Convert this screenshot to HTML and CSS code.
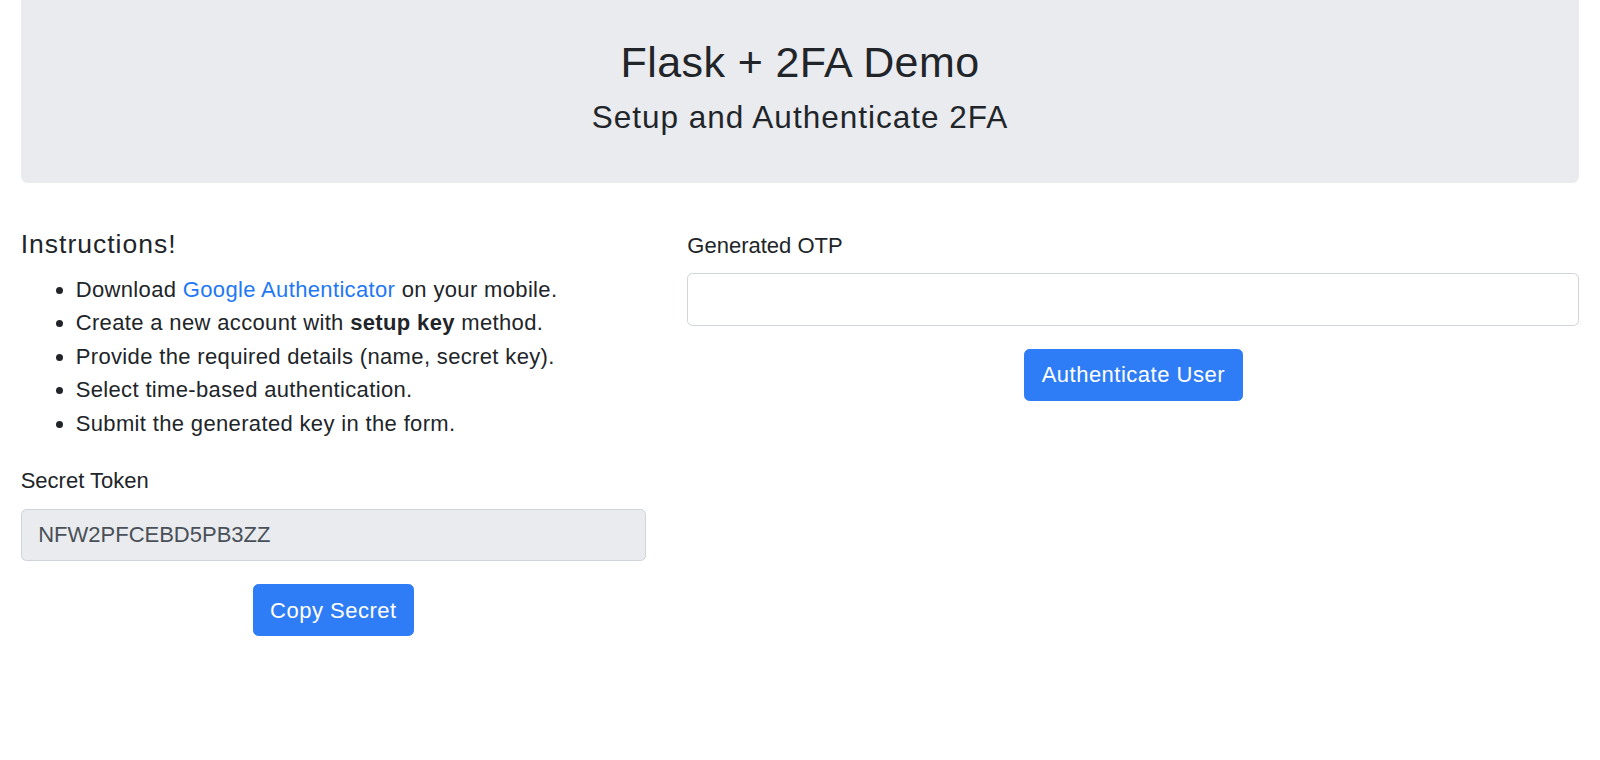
FILE: index.html
```html
<!DOCTYPE html>
<html lang="en">
<head>
<meta charset="utf-8">
<title>Flask + 2FA Demo</title>
<link rel="stylesheet" href="styles.css">
</head>
<body>
<div class="container">
  <div class="jumbotron">
    <h2 class="title">Flask + 2FA Demo</h2>
    <h4 class="subtitle">Setup and Authenticate 2FA</h4>
  </div>
  <div class="row">
    <div class="col col-5">
      <h5 class="instr-title">Instructions!</h5>
      <ul class="instr-list">
        <li>Download <a href="#" class="link">Google Authenticator</a> on your mobile.</li>
        <li>Create a new account with <b>setup key</b> method.</li>
        <li>Provide the required details (name, secret key).</li>
        <li>Select time-based authentication.</li>
        <li>Submit the generated key in the form.</li>
      </ul>
      <div class="form-group">
        <label class="label" for="secret">Secret Token</label>
        <input class="form-control readonly" id="secret" type="text" value="NFW2PFCEBD5PB3ZZ" readonly>
      </div>
      <div class="btn-wrap">
        <button class="btn" type="button">Copy Secret</button>
      </div>
    </div>
    <div class="col col-7">
      <form class="otp-form">
        <div class="form-group">
          <label class="label" for="otp">Generated OTP</label>
          <input class="form-control" id="otp" type="text">
        </div>
        <div class="btn-wrap">
          <button class="btn" type="button">Authenticate User</button>
        </div>
      </form>
    </div>
  </div>
</div>
</body>
</html>
```

FILE: styles.css
```css
* {
  box-sizing: border-box;
}

html, body {
  margin: 0;
  padding: 0;
  background: #ffffff;
}

body {
  font-family: "Liberation Sans", Arial, sans-serif;
  font-size: 22px;
  line-height: 33.6px;
  color: #212529;
}

.container {
  padding: 0 20.7px;
}

.jumbotron {
  background: #e9ebef;
  border-radius: 0 0 6.5px 6.5px;
  padding: 37px 20px 45.8px;
  text-align: center;
  margin-bottom: 45.9px;
}

.title {
  margin: 0 0 10.8px;
  font-size: 43px;
  line-height: 1.2;
  font-weight: 500;
  letter-spacing: 0.4px;
}

.subtitle {
  margin: 0;
  font-size: 31.5px;
  line-height: 1.2;
  font-weight: 500;
  letter-spacing: 1px;
}

.row {
  display: flex;
  margin: 0 -20.7px;
}

.col {
  padding: 0 20.7px;
}

.col-5 {
  flex: 0 0 41.6667%;
  max-width: 41.6667%;
}

.col-7 {
  flex: 0 0 58.3333%;
  max-width: 58.3333%;
}

.instr-title {
  margin: 0 0 12px;
  font-size: 26.5px;
  line-height: 1.2;
  font-weight: 500;
  letter-spacing: 1px;
}

.instr-list {
  margin: 0 0 23.3px;
  padding-left: 55px;
  letter-spacing: 0.35px;
}

.link {
  color: #1f78f5;
  text-decoration: none;
}

.instr-list b {
  font-weight: bold;
}

.otp-form {
  margin: 0;
}

.label {
  display: inline-block;
  margin-bottom: 11px;
}

.form-control {
  display: block;
  width: 100%;
  height: 52.2px;
  padding: 8.3px 16.5px;
  font-family: inherit;
  font-size: 22px;
  line-height: 33.6px;
  color: #495057;
  background: #ffffff;
  border: 1px solid #ced4da;
  border-radius: 5.5px;
  outline: none;
}

.form-control.readonly {
  background: #e9ebef;
}

.btn-wrap {
  text-align: center;
  margin-top: 23.5px;
}

.btn {
  display: inline-block;
  height: 52.2px;
  padding: 8.3px 16.5px;
  font-family: inherit;
  font-size: 22px;
  line-height: 33.6px;
  letter-spacing: 0.5px;
  color: #ffffff;
  background: #2f7df6;
  border: 1px solid #2f7df6;
  border-radius: 5.5px;
  cursor: pointer;
}
```
